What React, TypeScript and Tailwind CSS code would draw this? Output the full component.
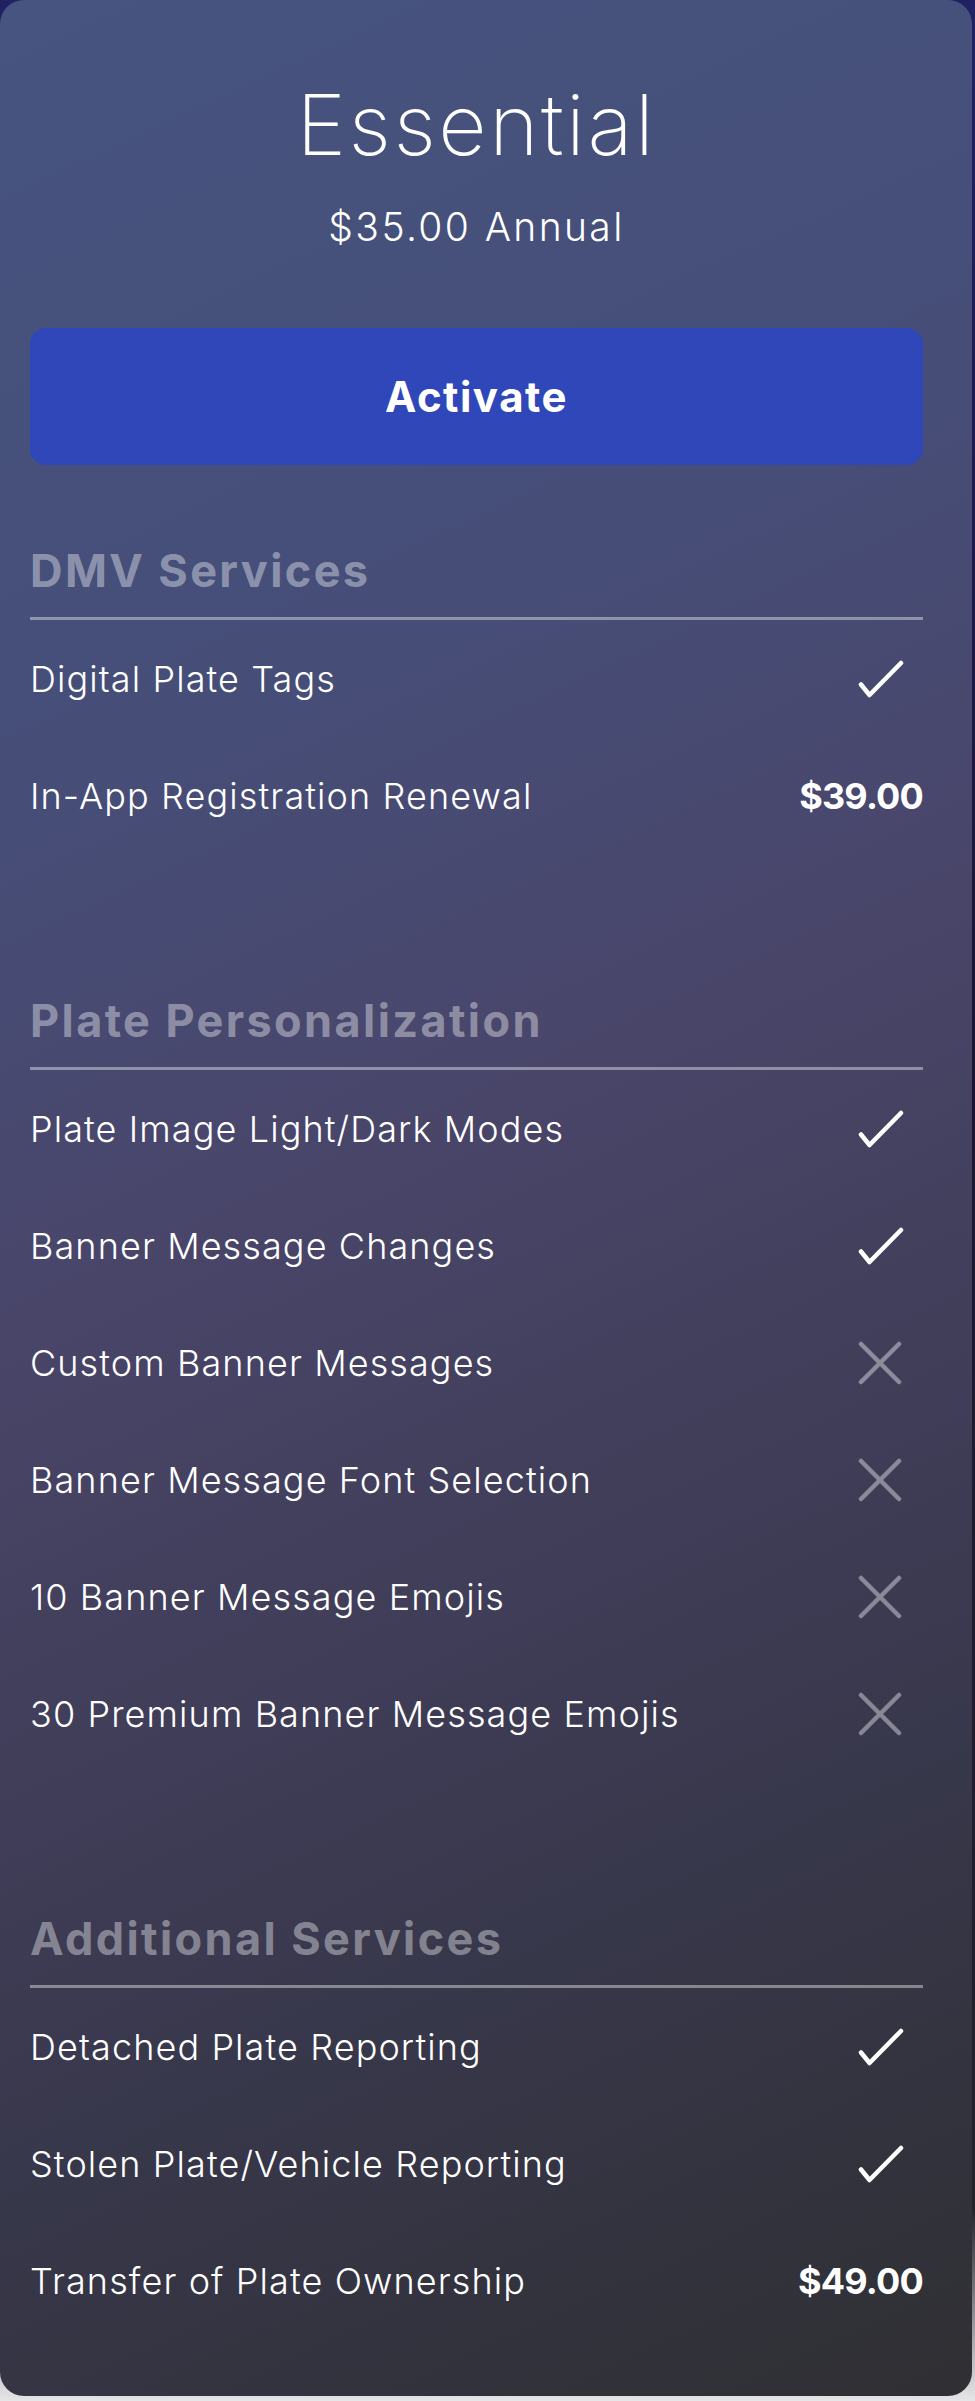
import React from "react";

type Value = "check" | "cross" | string;

interface Feature {
  label: string;
  value: Value;
}

interface Section {
  title: string;
  features: Feature[];
}

const sections: Section[] = [
  {
    title: "DMV Services",
    features: [
      { label: "Digital Plate Tags", value: "check" },
      { label: "In-App Registration Renewal", value: "$39.00" },
    ],
  },
  {
    title: "Plate Personalization",
    features: [
      { label: "Plate Image Light/Dark Modes", value: "check" },
      { label: "Banner Message Changes", value: "check" },
      { label: "Custom Banner Messages", value: "cross" },
      { label: "Banner Message Font Selection", value: "cross" },
      { label: "10 Banner Message Emojis", value: "cross" },
      { label: "30 Premium Banner Message Emojis", value: "cross" },
    ],
  },
  {
    title: "Additional Services",
    features: [
      { label: "Detached Plate Reporting", value: "check" },
      { label: "Stolen Plate/Vehicle Reporting", value: "check" },
      { label: "Transfer of Plate Ownership", value: "$49.00" },
    ],
  },
];

function CheckMark() {
  return (
    <svg width="48" height="40" viewBox="0 0 48 40" fill="none" className="text-white">
      <path
        d="M5 25.5 13.5 36 45 4"
        stroke="currentColor"
        strokeWidth="4.5"
        strokeLinecap="round"
        strokeLinejoin="round"
      />
    </svg>
  );
}

function Cross() {
  return (
    <svg width="48" height="44" viewBox="0 0 48 44" fill="none" className="text-white/40">
      <path
        d="M5 3 43 41M43 3 5 41"
        stroke="currentColor"
        strokeWidth="4.5"
        strokeLinecap="round"
      />
    </svg>
  );
}

function FeatureRow({ feature }: { feature: Feature }) {
  let right: React.ReactNode;
  if (feature.value === "check") {
    right = (
      <div className="pr-[19px]">
        <CheckMark />
      </div>
    );
  } else if (feature.value === "cross") {
    right = (
      <div className="pr-[19px]">
        <Cross />
      </div>
    );
  } else {
    right = <span className="text-[36px] font-bold leading-none tracking-[-0.8px]">{feature.value}</span>;
  }

  return (
    <div className="flex h-[117px] items-center justify-between">
      <span className="text-[36px] font-light leading-none tracking-[1.1px]">{feature.label}</span>
      {right}
    </div>
  );
}

export default function App() {
  return (
    <div
      className="min-h-[2401px] w-[975px] bg-[linear-gradient(to_bottom,#1f2163_0%,#1b1533_45%,#24232c_92%,#e6e6e8_100%)] text-white"
      style={{ fontFamily: "Inter, 'Noto Sans', sans-serif" }}
    >
      <div className="w-[972px] rounded-[24px] bg-[linear-gradient(155deg,#46547f_0%,#464e78_28%,#49466b_45%,#423f5c_60%,#37374a_78%,#2f2f33_100%)] pb-[57px] pl-[30px] pr-[49px] pt-[75px]">
        <div className="flex h-[100px] items-center justify-center">
          <h1 className="text-[84px] font-extralight leading-none tracking-[2.5px]">Essential</h1>
        </div>
        <div className="mt-[26px] flex h-[50px] items-center justify-center">
          <p className="text-[39px] font-light leading-none tracking-[2.4px]">$35.00 Annual</p>
        </div>

        <button className="mt-[77px] flex h-[137px] w-full items-center justify-center rounded-[16px] bg-[#2f47b8] text-[42px] font-bold leading-none tracking-[1.5px] text-white">
          Activate
        </button>

        <div className="mt-[59px]">
          {sections.map((section, i) => (
            <div key={section.title} className={i > 0 ? "mt-[120px]" : ""}>
              <div className="flex h-[93px] items-center">
                <h2 className="text-[45px] font-bold leading-none tracking-[2.4px] text-white/40">
                  {section.title}
                </h2>
              </div>
              <div className="h-[3px] bg-white/40" />
              {section.features.map((f) => (
                <FeatureRow key={f.label} feature={f} />
              ))}
            </div>
          ))}
        </div>
      </div>
    </div>
  );
}
